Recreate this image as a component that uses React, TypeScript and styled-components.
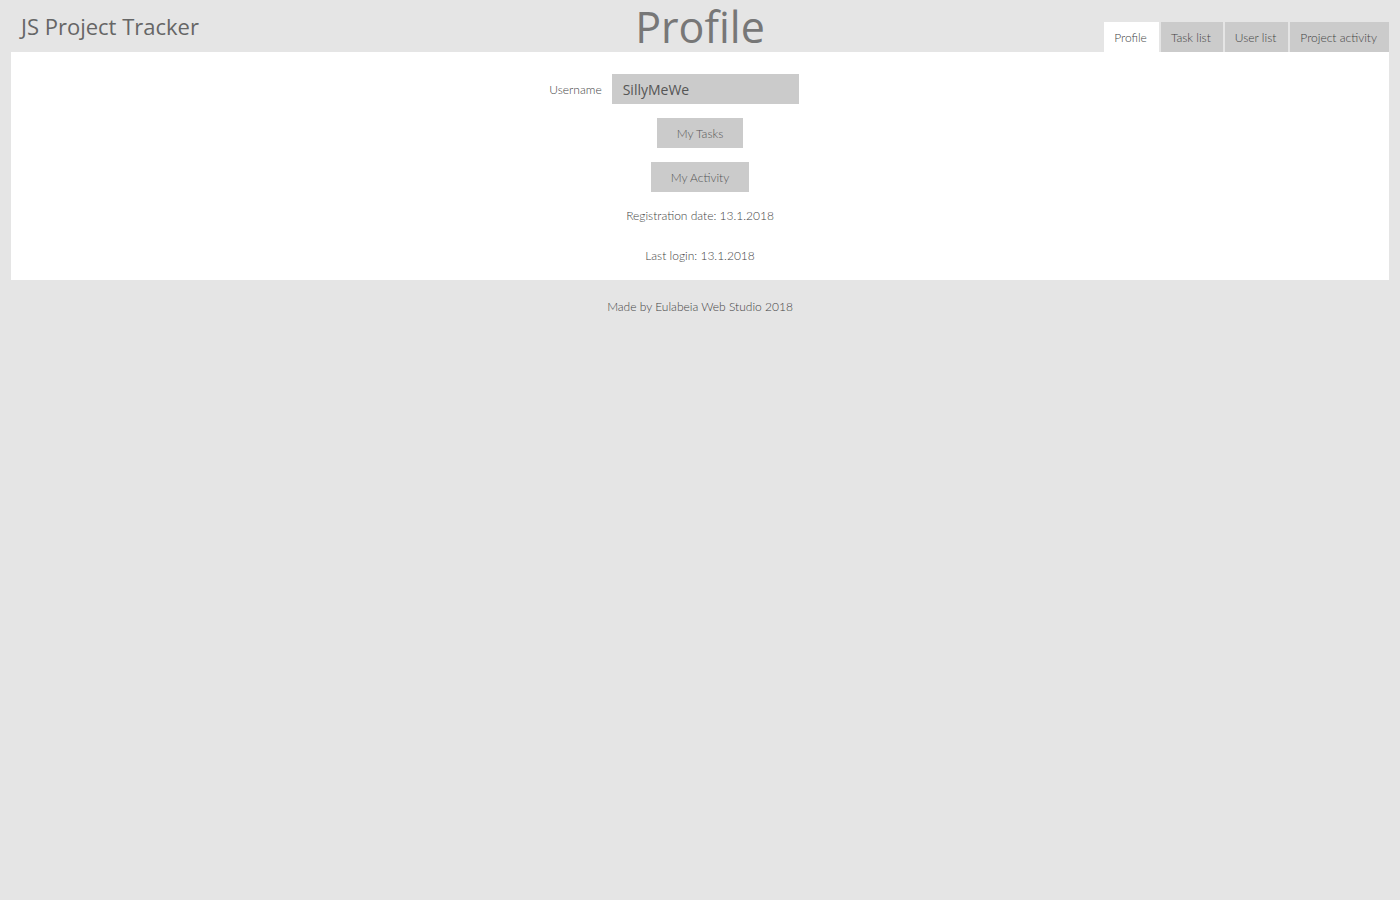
import React from "react";
import styled, { createGlobalStyle } from "styled-components";

const Global = createGlobalStyle`
  html, body { margin: 0; padding: 0; background: #e5e5e5; }
  body { font-family: Lato, "Liberation Sans", sans-serif; color: #555; }
  * { box-sizing: border-box; }
`;

const Page = styled.div`
  width: 1400px;
  min-height: 900px;
  background: #e5e5e5;
`;

const Header = styled.header`
  height: 52px;
  display: grid;
  grid-template-columns: 1fr auto 1fr;
  align-items: stretch;
  padding: 0 11px;
`;

const Brand = styled.div`
  align-self: start;
  margin: 11px 0 0 10px;
  font-family: "Open Sans", Inter, sans-serif;
  font-size: 22px;
  line-height: 30px;
  color: #666;
`;

const Title = styled.h1`
  margin: 0;
  padding-top: 2px;
  text-align: center;
  font-family: "Open Sans", Inter, sans-serif;
  font-weight: 400;
  font-size: 43px;
  line-height: 50px;
  color: #777;
`;

const Tabs = styled.nav`
  justify-self: end;
  align-self: end;
  display: flex;
  gap: 2px;
`;

const Tab = styled.div<{ $active?: boolean }>`
  height: 30px;
  padding: 0 12px 0 10px;
  display: flex;
  align-items: center;
  font-size: 12px;
  font-weight: 300;
  color: #444;
  background: ${(p) => (p.$active ? "#ffffff" : "#cbcbcb")};
`;

const Panel = styled.main`
  margin: 0 11px;
  background: #fff;
  padding: 22px 0 4px;
  display: flex;
  flex-direction: column;
  align-items: center;
`;

const Row = styled.div`
  display: flex;
  align-items: center;
  gap: 10px;
  padding-right: 52px;
`;

const Label = styled.label`
  font-size: 12px;
  font-weight: 300;
  color: #444;
`;

const Input = styled.div`
  width: 187px;
  height: 30px;
  background: #cbcbcb;
  padding: 0 11px;
  display: flex;
  align-items: center;
  font-family: "Open Sans", Inter, sans-serif;
  font-size: 14px;
  color: #555;
`;

const Button = styled.button<{ $w: number }>`
  width: ${(p) => p.$w}px;
  height: 30px;
  margin-top: 14px;
  padding: 0;
  border: none;
  background: #cbcbcb;
  font-family: Lato, sans-serif;
  font-size: 12px;
  font-weight: 300;
  color: #555;
`;

const Infos = styled.div`
  margin-top: 4px;
  display: flex;
  flex-direction: column;
  align-items: center;
`;

const Info = styled.p`
  margin: 0;
  height: 40px;
  line-height: 40px;
  font-size: 12px;
  font-weight: 300;
  color: #444;
`;

const Footer = styled.footer`
  text-align: center;
  font-size: 12px;
  font-weight: 300;
  color: #444;
  padding-top: 19px;
`;

export default function App() {
  return (
    <Page>
      <Global />
      <Header>
        <Brand>JS Project Tracker</Brand>
        <Title>Profile</Title>
        <Tabs>
          <Tab $active>Profile</Tab>
          <Tab>Task list</Tab>
          <Tab>User list</Tab>
          <Tab>Project activity</Tab>
        </Tabs>
      </Header>
      <Panel>
        <Row>
          <Label>Username</Label>
          <Input>SillyMeWe</Input>
        </Row>
        <Button $w={86}>My Tasks</Button>
        <Button $w={98}>My Activity</Button>
        <Infos>
          <Info>Registration date: 13.1.2018</Info>
          <Info>Last login: 13.1.2018</Info>
        </Infos>
      </Panel>
      <Footer>Made by Eulabeia Web Studio 2018</Footer>
    </Page>
  );
}
